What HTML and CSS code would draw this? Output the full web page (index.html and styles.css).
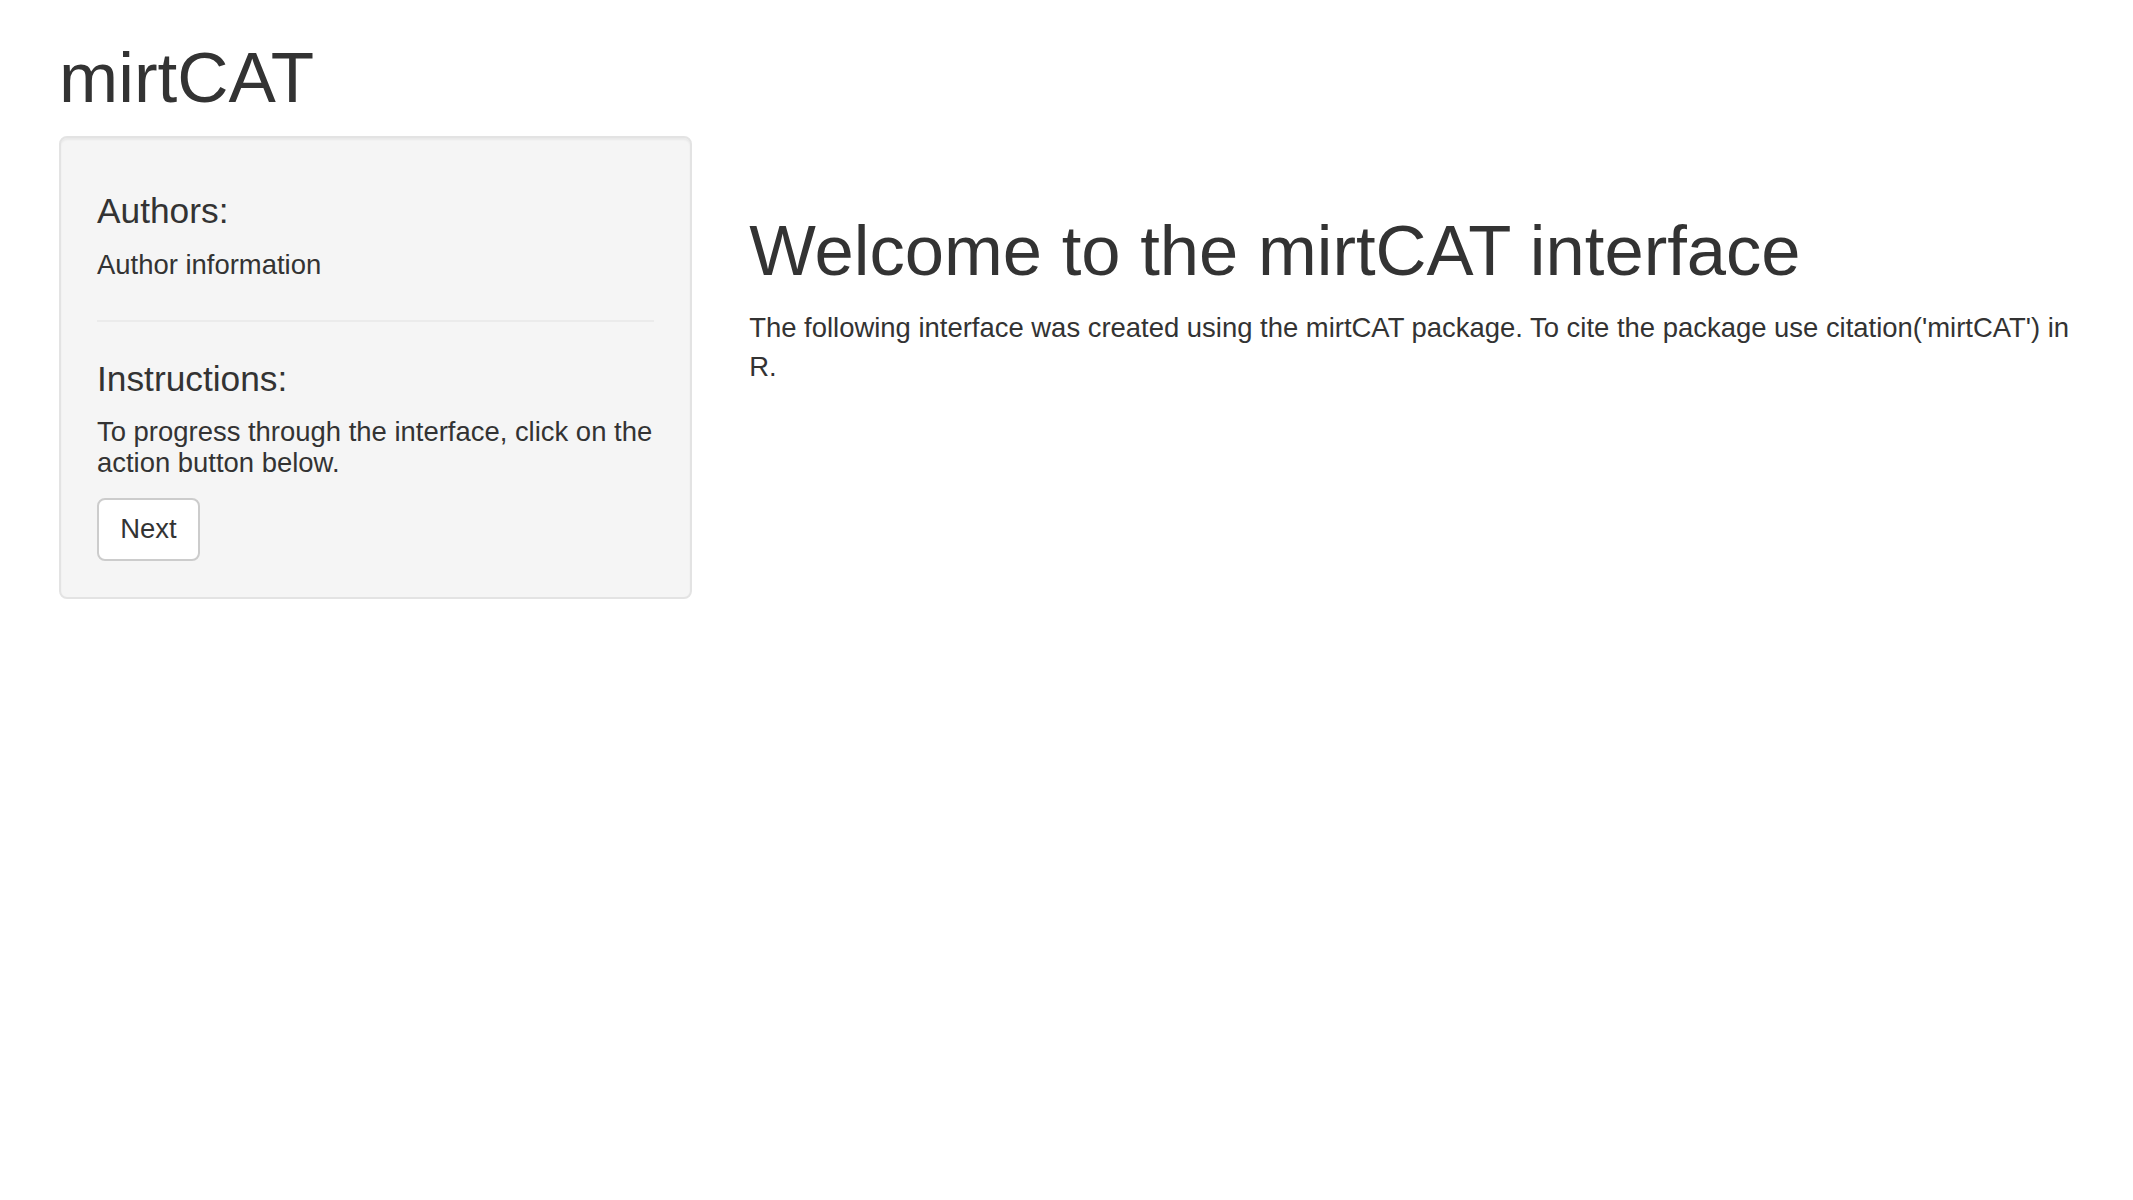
FILE: index.html
```html
<!DOCTYPE html>
<html lang="en">
<head>
<meta charset="utf-8">
<title>mirtCAT</title>
<link rel="stylesheet" href="styles.css">
</head>
<body>
<div class="page">
  <header class="header">
    <h1 class="app-title">mirtCAT</h1>
  </header>
  <div class="row">
    <aside class="sidebar">
      <div class="well">
        <h4 class="well-heading first">Authors:</h4>
        <h5 class="well-text">Author information</h5>
        <hr class="divider">
        <h4 class="well-heading">Instructions:</h4>
        <h5 class="well-text">To progress through the interface, click on the action button below.</h5>
        <button class="btn" type="button">Next</button>
      </div>
    </aside>
    <main class="main">
      <h1 class="welcome">Welcome to the mirtCAT interface</h1>
      <p class="intro">The following interface was created using the mirtCAT package. To cite the package use citation('mirtCAT') in R.</p>
    </main>
  </div>
</div>
</body>
</html>
```
FILE: styles.css
```css
html, body {
  margin: 0;
  padding: 0;
  background: #ffffff;
}

body {
  font-family: "Liberation Sans", Arial, sans-serif;
  font-size: 27.45px;
  line-height: 39px;
  color: #333333;
}

.page {
  padding: 0 32px 0 30.5px;
}

.header {
  padding: 0 28.5px;
}

.app-title {
  margin: 39px 0 19px;
  font-size: 71px;
  font-weight: 500;
  line-height: 1.1;
}

.row {
  display: grid;
  grid-template-columns: 1fr 2fr;
}

.sidebar {
  padding: 0 28.5px;
  min-width: 0;
}

.main {
  padding: 0 20px 0 28.5px;
  min-width: 0;
}

.well {
  background: #f5f5f5;
  border: 2px solid #e3e3e3;
  border-radius: 8px;
  box-shadow: inset 0 2px 2px rgba(0, 0, 0, 0.05);
  padding: 36px 34px 36px 36px;
}

.well-heading {
  margin: 0;
  font-size: 35.3px;
  font-weight: 500;
  line-height: 1.1;
}

.well-heading.first {
  margin-top: 18px;
}

.well-text {
  margin: 19px 0 0;
  font-size: 27.45px;
  font-weight: 500;
  line-height: 1.1;
}

.divider {
  margin: 40px 2px 37.5px 0;
  border: 0;
  border-top: 2px solid #ebebeb;
  height: 0;
}

.btn {
  display: inline-block;
  vertical-align: top;
  font-family: "Liberation Sans", Arial, sans-serif;
  font-size: 27.45px;
  line-height: 38px;
  color: #333333;
  background: #ffffff;
  border: 2px solid #cccccc;
  border-radius: 8px;
  padding: 10.5px 21.3px;
  margin: 20px 0 0;
  cursor: pointer;
}

.welcome {
  margin: 75.7px 0 18.3px;
  font-size: 70.6px;
  font-weight: 500;
  line-height: 1.1;
}

.intro {
  margin: 0;
  line-height: 39px;
}
```
